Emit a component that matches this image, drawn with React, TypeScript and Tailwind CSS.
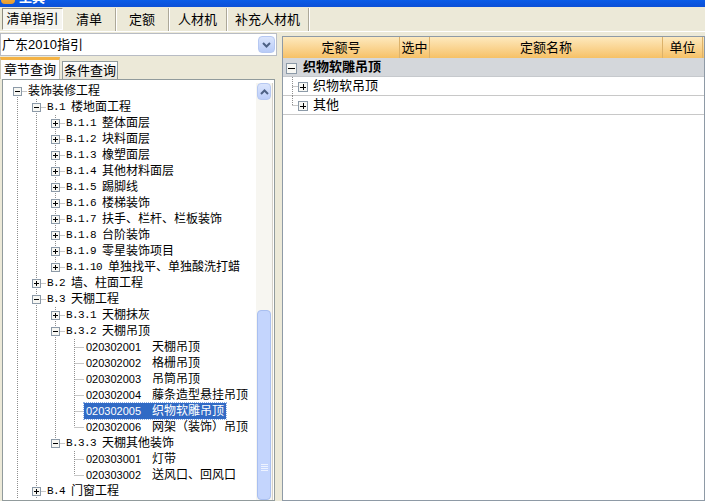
import React from 'react';

type Item = {
  name: string;
  code?: string;
  open?: boolean;
  kids?: Item[];
  sel?: boolean;
  more?: boolean; // has a following sibling below the visible area
};

const tree: Item[] = [
  {
    name: '装饰装修工程',
    open: true,
    more: true,
    kids: [
      {
        code: 'B.1',
        name: '楼地面工程',
        open: true,
        kids: [
          { code: 'B.1.1', name: '整体面层', kids: [] },
          { code: 'B.1.2', name: '块料面层', kids: [] },
          { code: 'B.1.3', name: '橡塑面层', kids: [] },
          { code: 'B.1.4', name: '其他材料面层', kids: [] },
          { code: 'B.1.5', name: '踢脚线', kids: [] },
          { code: 'B.1.6', name: '楼梯装饰', kids: [] },
          { code: 'B.1.7', name: '扶手、栏杆、栏板装饰', kids: [] },
          { code: 'B.1.8', name: '台阶装饰', kids: [] },
          { code: 'B.1.9', name: '零星装饰项目', kids: [] },
          { code: 'B.1.10', name: '单独找平、单独酸洗打蜡', kids: [] },
        ],
      },
      { code: 'B.2', name: '墙、柱面工程', kids: [] },
      {
        code: 'B.3',
        name: '天棚工程',
        open: true,
        kids: [
          { code: 'B.3.1', name: '天棚抹灰', kids: [] },
          {
            code: 'B.3.2',
            name: '天棚吊顶',
            open: true,
            kids: [
              { code: '020302001', name: '天棚吊顶' },
              { code: '020302002', name: '格栅吊顶' },
              { code: '020302003', name: '吊筒吊顶' },
              { code: '020302004', name: '藤条造型悬挂吊顶' },
              { code: '020302005', name: '织物软雕吊顶', sel: true },
              { code: '020302006', name: '网架（装饰）吊顶' },
            ],
          },
          {
            code: 'B.3.3',
            name: '天棚其他装饰',
            open: true,
            kids: [
              { code: '020303001', name: '灯带' },
              { code: '020303002', name: '送风口、回风口' },
            ],
          },
        ],
      },
      { code: 'B.4', name: '门窗工程', kids: [], more: true },
    ],
  },
];

type Row = { item: Item; level: number; guides: boolean[]; last: boolean; first: boolean };

const flatten = (nodes: Item[], level: number, guides: boolean[], out: Row[]) => {
  nodes.forEach((n, i) => {
    const last = i === nodes.length - 1 && !n.more;
    out.push({ item: n, level, guides, last, first: out.length === 0 });
    if (n.open && n.kids) flatten(n.kids, level + 1, [...guides, !last], out);
  });
  return out;
};

const rows = flatten(tree, 0, [], []);

const LINE = '#8f8f8f';

const Guide = ({ on }: { on: boolean }) => (
  <svg width="19" height="16" className="shrink-0">
    {on && <line x1="9.5" y1="0" x2="9.5" y2="16" stroke={LINE} strokeDasharray="1 1" />}
  </svg>
);

const Expander = ({ x, y, open, size = 9 }: { x: number; y: number; open: boolean; size?: number }) => {
  const m = Math.floor(size / 2);
  return (
    <g>
      <rect x={x + 0.5} y={y + 0.5} width={size - 1} height={size - 1} fill="#f7f7f3" stroke="#8c9aa8" />
      <line x1={x + 2} y1={y + m + 0.5} x2={x + size - 2} y2={y + m + 0.5} stroke="#000" />
      {!open && <line x1={x + m + 0.5} y1={y + 2} x2={x + m + 0.5} y2={y + size - 2} stroke="#000" />}
    </g>
  );
};

const Node = ({ r }: { r: Row }) => {
  const { item } = r;
  const expandable = !!item.kids;
  return (
    <svg width="19" height="16" className="shrink-0">
      {!r.first && <line x1="9.5" y1="0" x2="9.5" y2="8" stroke={LINE} strokeDasharray="1 1" />}
      {!r.last && <line x1="9.5" y1="8" x2="9.5" y2="16" stroke={LINE} strokeDasharray="1 1" />}
      <line x1="9.5" y1="8.5" x2="19" y2="8.5" stroke={LINE} strokeDasharray="1 1" />
      {expandable && <Expander x={5} y={4} open={!!item.open} />}
    </svg>
  );
};

const TreeRow = ({ r }: { r: Row }) => {
  const { item } = r;
  const leaf = !item.kids;
  return (
    <div className="flex h-4 items-center">
      {r.guides.map((g, i) => (
        <Guide key={i} on={g} />
      ))}
      <Node r={r} />
      {leaf ? (
        <span
          className={
            item.sel
              ? 'flex h-4 items-center bg-[#316ac5] text-white pl-[2px] pr-[2px] outline outline-1 outline-dotted outline-[#8fb0e6]'
              : 'flex h-4 items-center pl-[2px] pr-[2px]'
          }
        >
          <span className="w-[66px] font-['Liberation_Sans',sans-serif] text-[11px]">{item.code}</span>
          <span>{item.name}</span>
        </span>
      ) : (
        <span className="flex h-4 items-center pl-[1px] whitespace-nowrap">
          {item.code && (
            <span className="font-['Liberation_Mono',monospace] text-[11px] tracking-[-0.6px]">{item.code}&nbsp;</span>
          )}
          <span>{item.name}</span>
        </span>
      )}
    </div>
  );
};

const Chevron = ({ up }: { up?: boolean }) => (
  <svg width="9" height="6" viewBox="0 0 9 6">
    <path
      d={up ? 'M1 5 L4.5 1.5 L8 5' : 'M1 1 L4.5 4.5 L8 1'}
      fill="none"
      stroke="#4d6185"
      strokeWidth="2"
    />
  </svg>
);

const topTabs = [
  { label: '清单指引', w: 'w-[61px]', active: true },
  { label: '清单', w: 'w-[53px]' },
  { label: '定额', w: 'w-[53px]' },
  { label: '人材机', w: 'w-[58px]' },
  { label: '补充人材机', w: 'w-[82px]' },
];

const GridTree = ({ last }: { last: boolean }) => (
  <svg width="26" height="19" className="shrink-0">
    <line x1="9.5" y1="0" x2="9.5" y2={last ? 9 : 19} stroke={LINE} strokeDasharray="1 1" />
    <line x1="9.5" y1="9.5" x2="15" y2="9.5" stroke={LINE} strokeDasharray="1 1" />
    <Expander x={15} y={5} open={false} size={10} />
  </svg>
);

const App: React.FC = () => {
  return (
    <div className="w-[705px] h-[501px] overflow-hidden bg-[#ece9d8] flex flex-col text-xs leading-4 text-black font-['Liberation_Sans','Noto_Sans_CJK_SC',sans-serif]">
      {/* title bar, mostly cut off by the screenshot */}
      <div className="h-[7px] shrink-0 overflow-hidden bg-linear-to-b from-[#0a5ce8] to-[#0b4fd6]">
        <div className="flex items-end gap-[4px] -mt-[16px] h-[20px] pl-[1px]">
          <div className="w-[14px] h-[18px] rounded-sm bg-linear-to-b from-[#f7d26a] to-[#e89a2c]" />
          <span className="text-white font-bold text-[13px] leading-[13px]">工具</span>
        </div>
      </div>

      {/* top tabs */}
      <div className="h-[25px] shrink-0 flex items-end pl-[2px] border-b border-white">
        {topTabs.map((t) =>
          t.active ? (
            <div
              key={t.label}
              className={`${t.w} h-[22px] mb-[1px] flex items-center justify-center bg-[#f5f4ef] border border-t-[#8d8b80] border-l-[#8d8b80] border-r-white border-b-white text-[13px]`}
            >
              {t.label}
            </div>
          ) : (
            <div
              key={t.label}
              className={`${t.w} h-[23px] flex items-center justify-center border-r border-[#aca899] shadow-[1px_0_0_#ffffff] text-[13px]`}
            >
              {t.label}
            </div>
          ),
        )}
      </div>

      <div className="flex flex-1 min-h-0">
        {/* left panel */}
        <div className="w-[277px] shrink-0 flex flex-col">
          <div className="mt-[1px] h-[23px] flex items-center bg-white border border-[#b8bcc4] pl-[1px]">
            <span className="flex-1 text-[13px]">广东2010指引</span>
            <div className="w-[17px] h-[17px] mr-[1px] rounded-sm border border-[#b6c8f2] bg-linear-to-b from-[#dbe5fc] to-[#b8cbf7] flex items-center justify-center">
              <Chevron />
            </div>
          </div>

          <div className="h-[23px] flex items-end">
            <div className="w-[60px] h-[22px] flex items-center justify-center bg-[#fcfcfe] border-t-[3px] border-[#f4b244] border-x border-x-[#c9c5b5] text-[13px]">
              章节查询
            </div>
            <div className="w-[56px] h-[18px] ml-[2px] flex items-center justify-center bg-linear-to-b from-[#ffffff] to-[#e8e6dc] border border-b-0 border-[#919b9c] text-[13px]">
              条件查询
            </div>
          </div>

          <div className="flex-1 min-h-0 ml-[2px] w-[273px] border border-[#919b9c] bg-white flex">
            <div className="flex-1 overflow-hidden pl-[5px] pt-[3px]">
              {rows.map((r, i) => (
                <TreeRow key={i} r={r} />
              ))}
            </div>
            <div className="w-[17px] mt-[3px] mr-[1px] border-r border-[#d4d0c8] bg-[#f7f6f1] flex flex-col">
              <div className="h-[17px] mx-[1px] rounded-sm border border-[#b6c8f2] bg-linear-to-b from-[#dbe5fc] to-[#bccefa] flex items-center justify-center">
                <Chevron up />
              </div>
              <div className="h-[210px]" />
              <div className="flex-1 mx-[1px] rounded-sm border border-[#a9bff0] bg-[#c4d5fd] flex flex-col items-center justify-end pb-[28px] gap-[1px]">
                <div className="w-[7px] h-px bg-[#eef3ff]" />
                <div className="w-[7px] h-px bg-[#eef3ff]" />
                <div className="w-[7px] h-px bg-[#eef3ff]" />
                <div className="w-[7px] h-px bg-[#eef3ff]" />
              </div>
            </div>
          </div>
        </div>

        {/* splitter */}
        <div className="w-[5px] shrink-0" />

        {/* right panel */}
        <div className="flex-1 mt-[4px] border border-[#8e9aa6] bg-white flex flex-col">
          <div className="h-[21px] flex bg-linear-to-b from-[#fde9bd] to-[#f6c165] text-[13px]">
            <div className="w-[117px] flex items-center justify-center border-r border-[#dcb26a]">定额号</div>
            <div className="w-[30px] flex items-center justify-center border-r border-[#dcb26a]">选中</div>
            <div className="w-[233px] flex items-center justify-center border-r border-[#dcb26a]">定额名称</div>
            <div className="w-[40px] flex items-center justify-center border-r border-[#dcb26a]">单位</div>
            <div className="flex-1" />
          </div>
          <div className="h-[19px] flex items-center bg-[#d4d7db] border-b border-[#c6c9cd]">
            <svg width="20" height="19" className="shrink-0">
              <Expander x={3} y={5} open size={11} />
            </svg>
            <span className="font-bold text-[13px]">织物软雕吊顶</span>
          </div>
          {['织物软吊顶', '其他'].map((label, i) => (
            <div key={label} className="h-[19px] flex items-center border-b border-[#c8c8c8]">
              <GridTree last={i === 1} />
              <span className="pl-[4px] text-[13px]">{label}</span>
            </div>
          ))}
        </div>
      </div>
    </div>
  );
};

export default App;
